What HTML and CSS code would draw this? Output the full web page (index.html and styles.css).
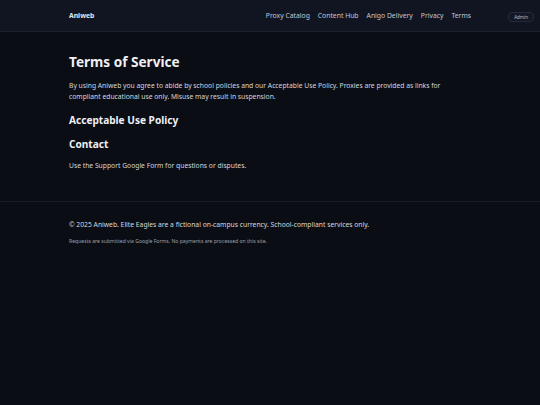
FILE: index.html
```html
<!DOCTYPE html>
<html lang="en">
<head>
<meta charset="utf-8">
<title>Terms of Service - Aniweb</title>
<link rel="stylesheet" href="styles.css">
</head>
<body>
<header class="site-header">
  <div class="container header-inner">
    <a class="brand" href="#">Aniweb</a>
    <nav class="nav">
      <a href="#">Proxy Catalog</a>
      <a href="#">Content Hub</a>
      <a href="#">Anigo Delivery</a>
      <a href="#">Privacy</a>
      <a href="#">Terms</a>
    </nav>
  </div>
  <button class="admin-btn">Admin</button>
</header>
<main class="container main">
  <h1>Terms of Service</h1>
  <p class="lead">By using Aniweb you agree to abide by school policies and our Acceptable Use Policy. Proxies are provided as links for compliant educational use only. Misuse may result in suspension.</p>
  <h2>Acceptable Use Policy</h2>
  <h2 class="second">Contact</h2>
  <p class="small">Use the Support Google Form for questions or disputes.</p>
</main>
<footer class="site-footer">
  <div class="container">
    <p class="foot-main">© 2025 Aniweb. Elite Eagles are a fictional on-campus currency. School-compliant services only.</p>
    <p class="foot-sub">Requests are submitted via Google Forms. No payments are processed on this site.</p>
  </div>
</footer>
</body>
</html>
```

FILE: styles.css
```css
* { box-sizing: border-box; }
html, body { margin: 0; padding: 0; }
body {
  background: #0b0d15;
  color: #e5e7eb;
  font-family: "Noto Sans", "Open Sans", sans-serif;
  height: 405px;
}
a { color: inherit; text-decoration: none; }
.container {
  width: 402px;
  margin: 0 auto;
}
.site-header {
  position: relative;
  height: 32px;
  background: #111522;
  border-bottom: 1px solid #1c2130;
}
.header-inner {
  height: 30px;
  display: flex;
  align-items: center;
  justify-content: space-between;
}
.brand {
  font-weight: 700;
  font-size: 6.8px;
  color: #e5e7eb;
}
.nav {
  display: flex;
  gap: 8px;
  font-size: 6.8px;
  color: #c3c8d2;
}
.admin-btn {
  position: absolute;
  right: 6px;
  top: 12px;
  height: 10px;
  padding: 0 5px;
  font-family: inherit;
  font-size: 4.5px;
  color: #b9bfca;
  background: #131826;
  border: 1px solid #232a3a;
  border-radius: 4px;
  line-height: 1;
}
.main {
  padding-top: 20px;
  padding-bottom: 30px;
}
h1 {
  margin: 0;
  font-size: 13.6px;
  line-height: 20px;
  font-weight: 700;
  color: #eef0f4;
}
.lead {
  margin: 8px 0 0;
  font-size: 6.75px;
  line-height: 11px;
  color: #d3d7de;
}
h2 {
  margin: 11px 0 0;
  font-size: 10.1px;
  line-height: 15px;
  font-weight: 700;
  color: #eef0f4;
}
h2.second { margin-top: 9px; }
.small {
  margin: 8px 0 0;
  font-size: 6.75px;
  line-height: 11px;
  color: #d3d7de;
}
.site-footer {
  border-top: 1px solid #161a26;
  padding-top: 17px;
}
.foot-main {
  margin: 0;
  font-size: 6.75px;
  line-height: 12px;
  color: #d6d9df;
}
.foot-sub {
  margin: 6px 0 0;
  font-size: 5.1px;
  line-height: 8px;
  color: #9ba1ad;
}
```
